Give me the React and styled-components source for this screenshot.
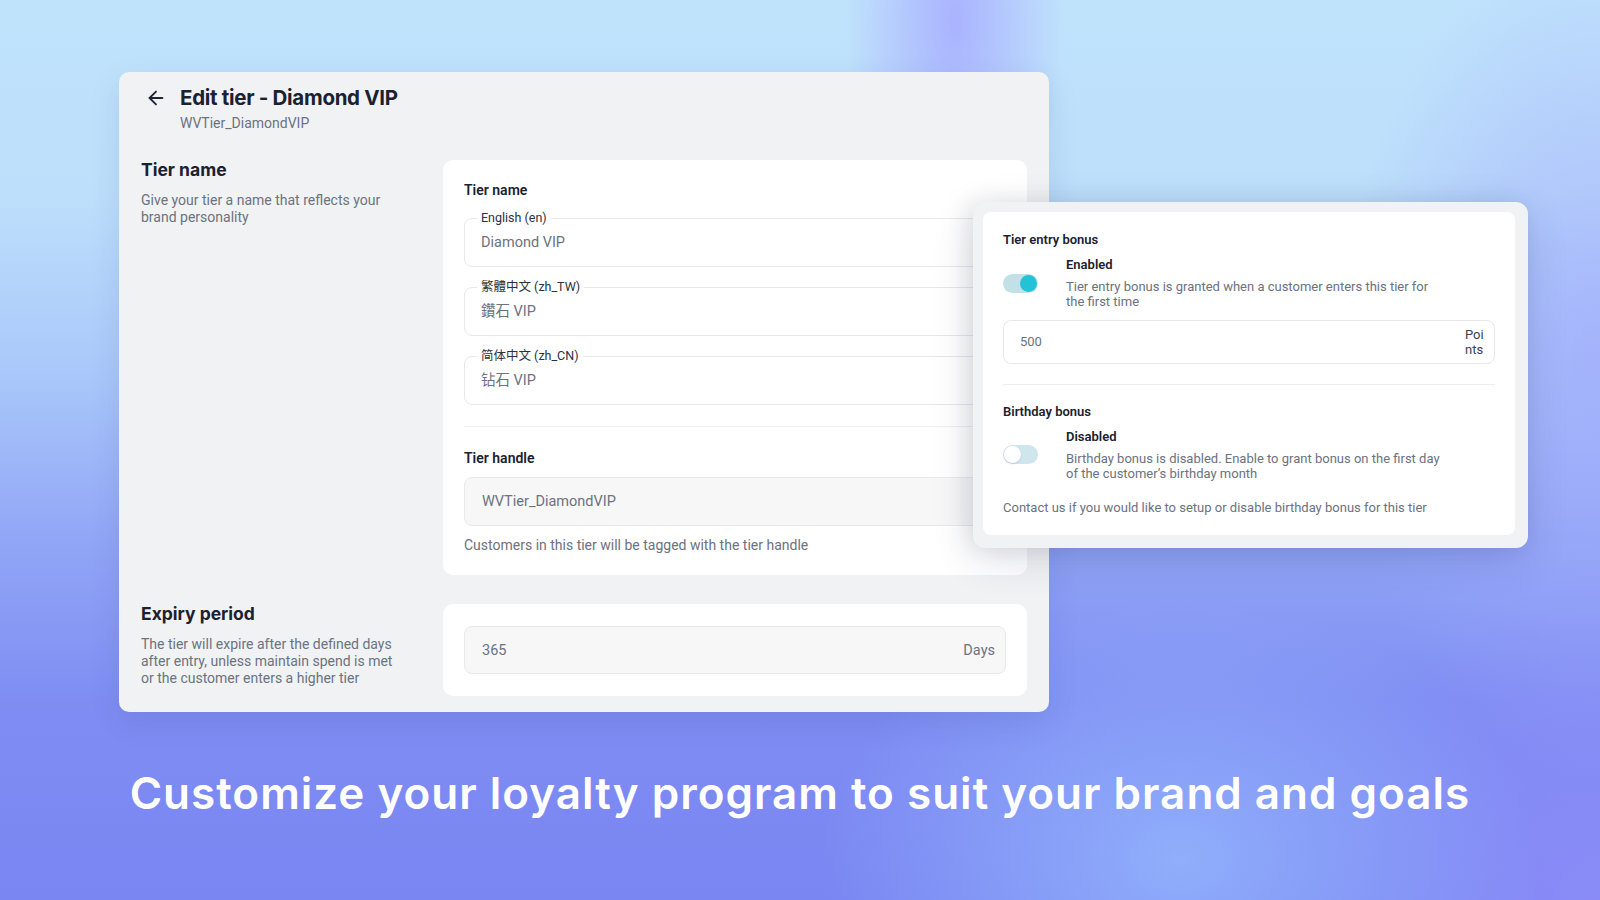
import React from 'react'
import styled, { createGlobalStyle } from 'styled-components'
import { ArrowLeft } from 'lucide-react'

const GlobalStyle = createGlobalStyle`
    body {
        margin: 0;
        font-family: Roboto, "Noto Sans CJK TC", "Noto Sans CJK SC", sans-serif;
        -webkit-font-smoothing: antialiased;
    }
`

const tierNames = [
    { label: 'English (en)', value: 'Diamond VIP' },
    { label: '繁體中文 (zh_TW)', value: '鑽石 VIP' },
    { label: '简体中文  (zh_CN)', value: '钻石 VIP' },
]

const Page = styled.div`
    position: relative;
    width: 1600px;
    height: 900px;
    overflow: hidden;
    display: flex;
    flex-direction: column;
    background:
        radial-gradient(ellipse 110px 240px at 955px 20px, rgba(168, 176, 255, 0.95), rgba(168, 176, 255, 0) 100%),
        radial-gradient(ellipse 260px 420px at 1600px 360px, rgba(160, 168, 252, 0.7), rgba(160, 168, 252, 0) 100%),
        radial-gradient(ellipse 360px 260px at 1180px 860px, rgba(146, 178, 252, 0.9), rgba(146, 178, 252, 0) 100%),
        radial-gradient(ellipse 300px 300px at 1600px 900px, rgba(140, 140, 248, 0.9), rgba(140, 140, 248, 0) 100%),
        linear-gradient(180deg, #c0e3fc 0%, #bddffb 22%, #a9c7fa 42%, #91a6f6 60%, #7f8df3 78%, #7a86f2 100%);
`

const Stage = styled.div`
    padding: 72px 0 0 119px;
`

const Panel = styled.div`
    width: 930px;
    box-sizing: border-box;
    padding: 13px 22px 16px;
    background: #f1f2f4;
    border-radius: 10px;
    box-shadow: 0 10px 30px rgba(40, 60, 120, 0.12);
`

const Header = styled.div`
    display: flex;
    align-items: flex-start;
    gap: 13px;
    margin-left: 4px;
`

const BackButton = styled.div`
    height: 26px;
    display: flex;
    align-items: center;
    color: #1f2633;
`

const Title = styled.h1`
    margin: 0;
    font-family: Inter, sans-serif;
    font-size: 20.5px;
    line-height: 26px;
    font-weight: 700;
    color: #1b2130;
    letter-spacing: -0.3px;
`

const Subtitle = styled.div`
    margin-top: 3px;
    font-size: 14px;
    line-height: 18px;
    color: #6b7280;
`

const Section = styled.div`
    display: grid;
    grid-template-columns: 270px 1fr;
    column-gap: 32px;
    margin-top: ${(p) => p.$gap}px;
`

const Aside = styled.div`
    margin-top: -1px;
`

const SectionTitle = styled.h2`
    margin: 0;
    font-family: Inter, sans-serif;
    font-size: 17.5px;
    line-height: 22px;
    font-weight: 700;
    color: #1b2130;
`

const SectionText = styled.p`
    margin: 11px 0 0;
    font-size: 14px;
    line-height: 17px;
    color: #6b7280;
    max-width: 262px;
`

const Card = styled.div`
    background: #ffffff;
    border-radius: 10px;
    padding: ${(p) => p.$pad};
`

const CardLabel = styled.div`
    height: 18px;
    font-size: 14px;
    line-height: 18px;
    font-weight: 600;
    color: #1b2130;
    margin-top: ${(p) => p.$gap || 0}px;
`

const Field = styled.fieldset`
    margin: ${(p) => p.$gap}px 0 0;
    padding: 0 16px 14px;
    border: 1px solid #e6e8eb;
    border-radius: 8px;
    min-width: 0;
`

const Legend = styled.legend`
    height: 14px;
    margin-left: -4px;
    padding: 0 4px;
    font-size: 12.5px;
    line-height: 14px;
    color: #2a3140;
`

const FieldValue = styled.div`
    height: 18px;
    margin-top: 9px;
    font-size: 14.5px;
    line-height: 18px;
    color: #6b7280;
`

const Divider = styled.div`
    height: 1px;
    background: #eceef0;
    margin-top: ${(p) => p.$gap}px;
`

const FilledInput = styled.div`
    display: flex;
    align-items: center;
    justify-content: space-between;
    height: ${(p) => p.$height}px;
    box-sizing: border-box;
    margin-top: ${(p) => p.$gap || 0}px;
    padding: 0 10px 0 17px;
    background: #f7f7f8;
    border: 1px solid #e8e9ec;
    border-radius: 8px;
    font-size: 14.5px;
    color: #6b7280;
`

const Helper = styled.div`
    margin-top: 10px;
    font-size: 14px;
    line-height: 18px;
    color: #6b7280;
`

const FloatingPanel = styled.div`
    position: absolute;
    left: 973px;
    top: 202px;
    width: 555px;
    box-sizing: border-box;
    padding: 10px 13px 13px 10px;
    background: #f1f2f4;
    border-radius: 12px;
    box-shadow: 0 10px 40px rgba(30, 40, 90, 0.16), -6px 0 22px rgba(0, 0, 0, 0.07);
`

const BonusCard = styled.div`
    background: #ffffff;
    border-radius: 8px;
    padding: 20px 20px 19px;
`

const BonusTitle = styled.div`
    font-size: 13px;
    line-height: 16px;
    font-weight: 600;
    color: #1b2130;
    margin-top: ${(p) => p.$gap || 0}px;
`

const ToggleRow = styled.div`
    display: flex;
    align-items: center;
    gap: 28px;
    margin-top: 9px;
`

const Toggle = styled.div`
    position: relative;
    flex: none;
    width: 35px;
    height: 19px;
    border-radius: 10px;
    background: ${(p) => (p.$on ? '#c2e1e7' : '#cfe6ec')};

    &::after {
        content: '';
        position: absolute;
        top: 1px;
        left: ${(p) => (p.$on ? '17px' : '1px')};
        width: 17px;
        height: 17px;
        border-radius: 50%;
        background: ${(p) => (p.$on ? '#23c2d6' : '#ffffff')};
        box-shadow: ${(p) => (p.$on ? 'none' : '0 1px 2px rgba(0,0,0,0.12)')};
    }
`

const ToggleState = styled.div`
    font-size: 13px;
    line-height: 16px;
    font-weight: 600;
    color: #1b2130;
`

const ToggleText = styled.div`
    margin-top: 6px;
    max-width: 376px;
    font-size: 13px;
    line-height: 15.3px;
    color: #6b7280;
`

const PointsInput = styled.div`
    display: flex;
    align-items: center;
    justify-content: space-between;
    height: 44px;
    box-sizing: border-box;
    margin-top: 10px;
    padding: 0 9px 0 16px;
    border: 1px solid #e6e8eb;
    border-radius: 8px;
    font-size: 13px;
    color: #6b7280;
`

const Suffix = styled.div`
    width: 20px;
    font-size: 13px;
    line-height: 15px;
    color: #3a4150;
    word-break: break-all;
`

const Note = styled.div`
    margin-top: 19px;
    font-size: 13px;
    line-height: 16px;
    color: #6b7280;
`

const Headline = styled.div`
    margin-top: 55px;
    text-align: center;
    font-family: Inter, sans-serif;
    font-size: 44px;
    line-height: 52px;
    font-weight: 600;
    letter-spacing: 1px;
    color: #ffffff;
`

const App = () => {
    return (
        <Page>
            <GlobalStyle />
            <Stage>
                <Panel>
                    <Header>
                        <BackButton>
                            <ArrowLeft size={22} strokeWidth={2} />
                        </BackButton>
                        <div>
                            <Title>Edit tier - Diamond VIP</Title>
                            <Subtitle>WVTier_DiamondVIP</Subtitle>
                        </div>
                    </Header>

                    <Section $gap={28}>
                        <Aside>
                            <SectionTitle>Tier name</SectionTitle>
                            <SectionText>Give your tier a name that reflects your brand personality</SectionText>
                        </Aside>
                        <Card $pad="21px 21px 21px">
                            <CardLabel>Tier name</CardLabel>
                            {tierNames.map((t, i) => (
                                <Field key={t.label} $gap={i === 0 ? 12 : 13}>
                                    <Legend>{t.label}</Legend>
                                    <FieldValue>{t.value}</FieldValue>
                                </Field>
                            ))}
                            <Divider $gap={21} />
                            <CardLabel $gap={22}>Tier handle</CardLabel>
                            <FilledInput $height={49} $gap={10}>WVTier_DiamondVIP</FilledInput>
                            <Helper>Customers in this tier will be tagged with the tier handle</Helper>
                        </Card>
                    </Section>

                    <Section $gap={29}>
                        <Aside>
                            <SectionTitle>Expiry period</SectionTitle>
                            <SectionText>
                                The tier will expire after the defined days after entry, unless maintain spend is met or the customer enters a higher tier
                            </SectionText>
                        </Aside>
                        <Card $pad="22px 21px">
                            <FilledInput $height={48}>
                                <span>365</span>
                                <span>Days</span>
                            </FilledInput>
                        </Card>
                    </Section>
                </Panel>
            </Stage>

            <FloatingPanel>
                <BonusCard>
                    <BonusTitle>Tier entry bonus</BonusTitle>
                    <ToggleRow>
                        <Toggle $on />
                        <div>
                            <ToggleState>Enabled</ToggleState>
                            <ToggleText>Tier entry bonus is granted when a customer enters this tier for the first time</ToggleText>
                        </div>
                    </ToggleRow>
                    <PointsInput>
                        <span>500</span>
                        <Suffix>Points</Suffix>
                    </PointsInput>
                    <Divider $gap={20} />
                    <BonusTitle $gap={19}>Birthday bonus</BonusTitle>
                    <ToggleRow>
                        <Toggle />
                        <div>
                            <ToggleState>Disabled</ToggleState>
                            <ToggleText>Birthday bonus is disabled. Enable to grant bonus on the first day of the customer’s birthday month</ToggleText>
                        </div>
                    </ToggleRow>
                    <Note>Contact us if you would like to setup or disable birthday bonus for this tier</Note>
                </BonusCard>
            </FloatingPanel>

            <Headline>Customize your loyalty program to suit your brand and goals</Headline>
        </Page>
    )
}

export default App
